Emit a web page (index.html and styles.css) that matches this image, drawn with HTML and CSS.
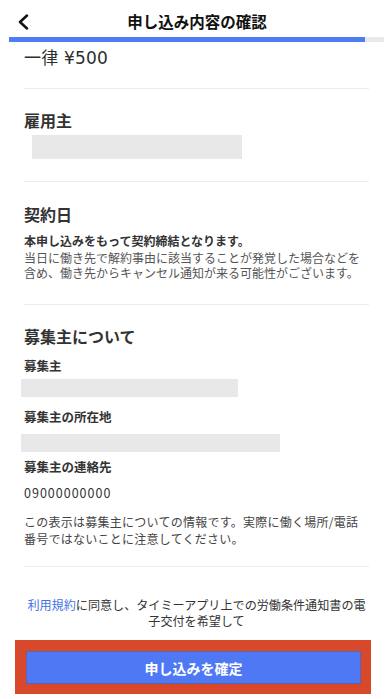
FILE: index.html
```html
<!DOCTYPE html>
<html lang="ja">
<head>
<meta charset="utf-8">
<link rel="stylesheet" href="styles.css">
</head>
<body>
<header class="topbar">
  <span class="back"><svg width="12" height="16" viewBox="0 0 12 16"><path d="M10 1.5 L3 8 L10 14.5" fill="none" stroke="#111" stroke-width="2.5" stroke-linecap="round" stroke-linejoin="round"/></svg></span>
  <h1 class="title">申し込み内容の確認</h1>
</header>
<div class="progress"><div class="progress-fill"></div></div>

<main class="content">
  <section class="sec sec-price">
    <p class="price">一律 ¥500</p>
  </section>

  <section class="sec sec-employer">
    <h2 class="heading">雇用主</h2>
    <div class="blank blank-employer"></div>
  </section>

  <section class="sec sec-contract">
    <h2 class="heading">契約日</h2>
    <p class="strong-line">本申し込みをもって契約締結となります。</p>
    <p class="body-text">当日に働き先で解約事由に該当することが発覚した場合などを含め、働き先からキャンセル通知が来る可能性がございます。</p>
  </section>

  <section class="sec sec-recruiter">
    <h2 class="heading">募集主について</h2>
    <h3 class="label label-first">募集主</h3>
    <div class="blank blank-name"></div>
    <h3 class="label label-addr">募集主の所在地</h3>
    <div class="blank blank-addr"></div>
    <h3 class="label label-tel">募集主の連絡先</h3>
    <p class="tel">09000000000</p>
    <p class="note">この表示は募集主についての情報です。実際に働く場所/電話番号ではないことに注意してください。</p>
  </section>

  <section class="sec-agree">
    <p class="agree"><span class="link">利用規約</span>に同意し、タイミーアプリ上での労働条件通知書の電子交付を希望して</p>
  </section>
</main>

<div class="cta-frame">
  <button class="cta">申し込みを確定</button>
</div>
</body>
</html>
```

FILE: styles.css
```css
* { box-sizing: border-box; }
html, body { margin: 0; padding: 0; background: #fff; }
body {
  font-family: "Noto Sans CJK JP", "Noto Sans", sans-serif;
  color: #333;
  width: 392px;
  height: 699px;
  overflow: hidden;
}
p, h1, h2, h3 { margin: 0; }

.topbar {
  height: 37px;
  display: flex;
  align-items: center;
  justify-content: center;
  position: relative;
}
.back {
  position: absolute;
  left: 17px;
  top: 14px;
  width: 12px;
  height: 16px;
  display: block;
}
.back svg { display: block; }
.title {
  font-size: 15.5px;
  font-weight: 700;
  color: #111;
  line-height: 22px;
  margin-top: 5px;
  padding-left: 2px;
}

.progress {
  height: 5px;
  margin: 0 8px 0 9px;
  background: #e9e9e9;
}
.progress-fill {
  width: 356px;
  height: 5px;
  background: #4d7cf4;
}

.content { padding: 0 23px 0 24px; }
.sec { border-bottom: 1px solid #ececec; }

.sec-price { padding: 4px 0 18px; }
.price {
  font-family: "DejaVu Sans", "Noto Sans CJK JP", sans-serif;
  font-size: 17px;
  letter-spacing: 0.2px;
  line-height: 24px;
  color: #2e2e2e;
}

.heading { font-size: 16px; font-weight: 700; line-height: 22px; color: #333; }

.sec-employer { padding: 20px 0 22px; }
.blank { background: #e8e8e8; }
.blank-employer { width: 210px; height: 24px; margin: 4px 0 0 8px; }

.sec-contract { padding: 21px 0 24px; }
.strong-line { font-size: 12px; font-weight: 700; line-height: 16px; margin-top: 8px; color: #333; }
.body-text { font-size: 12px; line-height: 15px; margin-top: 1px; color: #555; }

.sec-recruiter { padding: 20px 0 19px; }
.label { font-size: 12.5px; font-weight: 700; line-height: 18px; color: #333; }
.label-first { margin-top: 10px; }
.blank-name { width: 217px; height: 18px; margin: 4px 0 0 -3px; }
.label-addr { margin-top: 11px; }
.blank-addr { width: 259px; height: 18px; margin: 8px 0 0 -3px; }
.label-tel { margin-top: 6px; }
.tel { font-size: 12.5px; line-height: 18px; margin-top: 8px; letter-spacing: 1px; color: #333; }
.note { font-size: 12px; letter-spacing: 0.25px; line-height: 16.5px; margin-top: 12px; color: #444; }

.sec-agree { padding-top: 30px; }
.agree { font-size: 12.1px; line-height: 16px; text-align: center; color: #333; }
.link { color: #3f74e6; }

.cta-frame {
  margin: 11px 21px 0 15px;
  padding: 11px 10px 10px 11px;
  background: #d8492b;
}
.cta {
  display: block;
  width: 100%;
  height: 33px;
  border: 1px solid #5a64b0;
  background: #4f78f5;
  color: #fff;
  font-family: "Noto Sans CJK JP", "Noto Sans", sans-serif;
  font-size: 14px;
  font-weight: 700;
  padding: 0;
}
```
